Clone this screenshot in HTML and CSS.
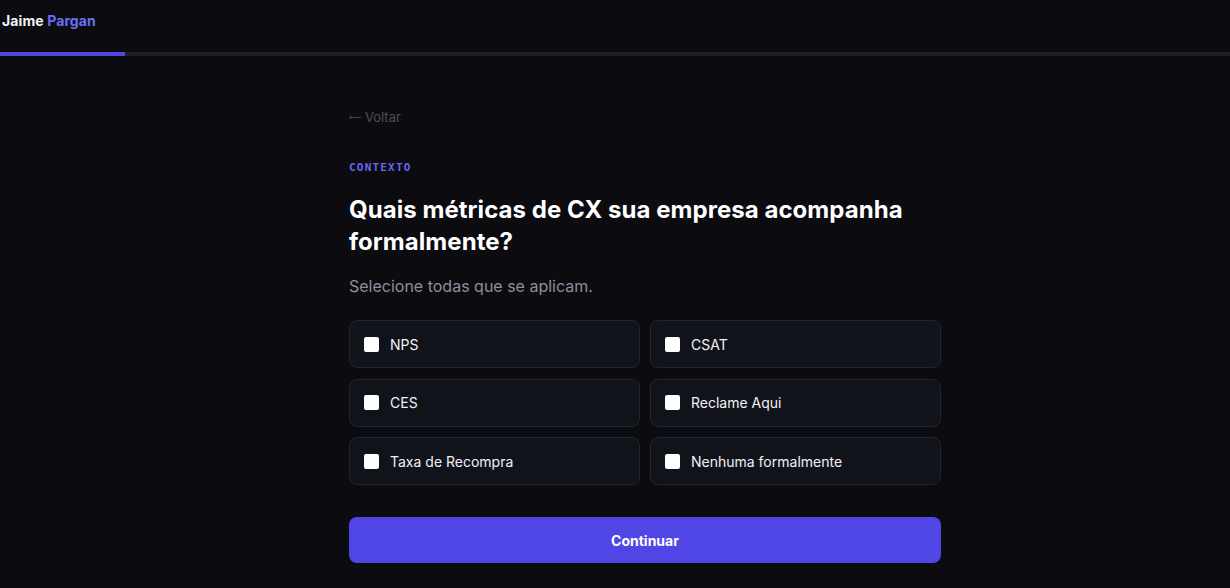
FILE: index.html
```html
<!DOCTYPE html>
<html lang="pt-BR">
<head>
<meta charset="utf-8">
<title>Jaime Pargan — Diagnóstico</title>
<link rel="stylesheet" href="styles.css">
</head>
<body>
  <header class="topbar">
    <div class="brand"><span class="brand-first">Jaime</span> <span class="brand-last">Pargan</span></div>
  </header>
  <div class="progress"><div class="progress-fill" style="width: 10.2%"></div></div>

  <main class="page">
    <section class="step">
      <a class="back" href="#"><span class="back-arrow">&#10229;</span><span>Voltar</span></a>
      <p class="eyebrow">CONTEXTO</p>
      <h1 class="question">Quais métricas de CX sua empresa acompanha formalmente?</h1>
      <p class="hint">Selecione todas que se aplicam.</p>

      <div class="options">
        <label class="option"><input type="checkbox" class="check"><span>NPS</span></label>
        <label class="option"><input type="checkbox" class="check"><span>CSAT</span></label>
        <label class="option"><input type="checkbox" class="check"><span>CES</span></label>
        <label class="option"><input type="checkbox" class="check"><span>Reclame Aqui</span></label>
        <label class="option"><input type="checkbox" class="check"><span>Taxa de Recompra</span></label>
        <label class="option"><input type="checkbox" class="check"><span>Nenhuma formalmente</span></label>
      </div>

      <button class="continue" type="button">Continuar</button>
    </section>
  </main>
</body>
</html>
```

FILE: styles.css
```css
* {
  box-sizing: border-box;
}

html, body {
  margin: 0;
  padding: 0;
  background: #0b0b10;
  color: #f4f4f6;
  font-family: "Inter", "Liberation Sans", sans-serif;
}

.topbar {
  height: 52px;
  display: flex;
  align-items: flex-start;
  padding: 12px 2px 0;
}

.brand {
  font-size: 14px;
  font-weight: 700;
  line-height: 18px;
  letter-spacing: 0.1px;
}

.brand-first {
  color: #f4f4f6;
}

.brand-last {
  color: #6b6ef2;
}

.progress {
  height: 4px;
  background: #1e1e25;
}

.progress-fill {
  height: 100%;
  background: #4f46e5;
}

.page {
  display: flex;
  justify-content: center;
  padding: 51px 0 0 60px;
}

.step {
  width: 592px;
  display: flex;
  flex-direction: column;
  align-items: flex-start;
}

.back {
  display: flex;
  align-items: center;
  gap: 3px;
  height: 20px;
  color: #4c505d;
  text-decoration: none;
  font-size: 13px;
  line-height: 20px;
}

.back-arrow {
  font-family: "DejaVu Sans", sans-serif;
  font-size: 9px;
  line-height: 20px;
}

.eyebrow {
  margin: 33px 0 0;
  font-family: "DejaVu Sans Mono", "Liberation Mono", monospace;
  font-size: 11px;
  line-height: 16px;
  height: 16px;
  letter-spacing: 1.2px;
  font-weight: 700;
  color: #6467ee;
}

.question {
  margin: 18px 0 0;
  font-size: 24px;
  line-height: 32px;
  font-weight: 700;
  letter-spacing: 0.05px;
  color: #ffffff;
  max-width: 580px;
}

.hint {
  margin: 16px 0 0;
  font-size: 16px;
  line-height: 24px;
  color: #8b909c;
}

.options {
  margin-top: 22px;
  width: 100%;
  display: grid;
  grid-template-columns: 1fr 1fr;
  column-gap: 10px;
  row-gap: 10.5px;
}

.option {
  height: 48px;
  display: flex;
  align-items: center;
  gap: 11px;
  padding: 0 14px;
  background: #11131a;
  border: 1px solid #22252e;
  border-radius: 8px;
  font-size: 14px;
  color: #f1f1f4;
  cursor: pointer;
}

.check {
  appearance: none;
  -webkit-appearance: none;
  margin: 0;
  width: 15px;
  height: 15px;
  background: #ffffff;
  border-radius: 2px;
  flex: none;
}

.continue {
  margin-top: 32px;
  width: 100%;
  height: 46px;
  border: none;
  border-radius: 8px;
  background: #4f46e5;
  color: #ffffff;
  font-family: "Inter", "Liberation Sans", sans-serif;
  font-size: 14px;
  font-weight: 700;
  cursor: pointer;
}
```
